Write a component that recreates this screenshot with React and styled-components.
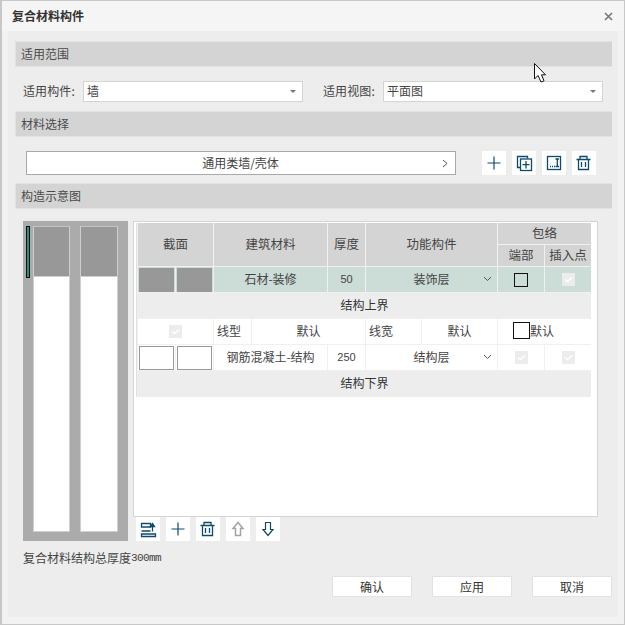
import React from "react";
import styled, { createGlobalStyle } from "styled-components";

const Global = createGlobalStyle`
  html, body { margin: 0; padding: 0; width: 625px; height: 625px; overflow: hidden; background: #fff; }
  * { box-sizing: border-box; }
`;

const Window = styled.div`
  position: relative;
  width: 625px;
  height: 625px;
  background: #f2f2f2;
  border: 1px solid #c8c8c8;
  border-left-width: 2px;
  font: 12px/1 "Noto Sans CJK SC", "Liberation Sans", sans-serif;
  color: #444;
  display: flex;
  flex-direction: column;
`;
const TitleBar = styled.div`
  height: 30px;
  flex: none;
  background: #f5f5f5;
  display: flex;
  align-items: center;
  justify-content: space-between;
  padding: 0 10px 0 10px;
`;
const Title = styled.div`
  font-weight: 700;
  font-size: 12px;
  color: #333;
`;
const Close = styled.svg`
  width: 9px;
  height: 9px;
  margin-right: 1px;
`;
const Body = styled.div`
  flex: none;
  height: 586px;
  margin: 0 6px 0 6px;
  background: #ededed;
  padding: 10px 0 0 7px;
  display: flex;
  flex-direction: column;
`;
const SectionBar = styled.div`
  width: 597px;
  height: 26px;
  flex: none;
  background: #d4d4d4;
  border: 1px solid #e2e2e2;
  border-width: 1px 0 1px 1px;
  padding-left: 5px;
  display: flex;
  align-items: center;
  font-size: 12px;
  color: #4a4a4a;
`;
const ScopeRow = styled.div`
  height: 44px;
  flex: none;
  display: flex;
  align-items: center;
  padding-left: 8px;
  padding-top: 4px;
`;
const FieldLabel = styled.span`
  width: 60px;
  flex: none;
  letter-spacing: 0.1px;
`;
const Select = styled.div`
  width: 220px;
  height: 21px;
  flex: none;
  background: #fff;
  border: 1px solid #d4d4d4;
  display: flex;
  align-items: center;
  justify-content: space-between;
  padding: 0 6px 0 3px;
  margin-right: ${(p) => p.$gap || 0}px;
`;
const Caret = styled.i`
  width: 0;
  height: 0;
  border: 3px solid transparent;
  border-top: 3px solid #777;
  border-bottom: 0;
`;
const MaterialRow = styled.div`
  height: 46px;
  flex: none;
  display: flex;
  align-items: flex-start;
  padding: 14px 0 0 11px;
`;
const MaterialButton = styled.div`
  position: relative;
  width: 430px;
  height: 24px;
  background: #fff;
  border: 1px solid #a9a9a9;
  margin-right: 26px;
  display: flex;
  align-items: center;
  justify-content: center;
  padding-right: 1px;
`;
const Chevron = styled.svg`
  position: absolute;
  right: 7px;
  top: 7px;
  width: 6px;
  height: 9px;
`;
const IconRow = styled.div`
  display: flex;
  gap: 6px;
`;
const IconBtn = styled.div`
  width: 24px;
  height: 24px;
  background: #fff;
  display: flex;
  align-items: center;
  justify-content: center;
`;
const IconSvg = styled.svg`
  width: 24px;
  height: 24px;
  fill: none;
  stroke: ${(p) => p.$c || "#0e4a6c"};
  stroke-width: ${(p) => p.$w || 1.3};
`;
const SchemeArea = styled.div`
  display: flex;
  padding: 12px 0 0 8px;
  gap: 5px;
`;
const Preview = styled.div`
  position: relative;
  width: 105px;
  height: 320px;
  flex: none;
  background: #ababab;
  display: flex;
  gap: 10px;
  padding: 5px 10px 9px 10px;
`;
const PreviewCol = styled.div`
  flex: ${(p) => (p.$wide ? "0 0 38px" : "0 0 37px")};
  background: #fff;
  border: 1px solid #cfcfcf;
  border-top-color: #c4c4c4;
  display: flex;
  flex-direction: column;
`;
const PreviewFill = styled.div`
  height: 50px;
  background: #989898;
  border-bottom: 1px solid #cfcfcf;
`;
const Marker = styled.div`
  position: absolute;
  left: 3px;
  top: 5px;
  width: 4px;
  height: 52px;
  background: #2e8f7d;
  border: 1px solid #111;
`;
const RightCol = styled.div`
  display: flex;
  flex-direction: column;
`;
const TableBox = styled.div`
  width: 465px;
  height: 296px;
  background: #fff;
  border: 1px solid #d4d4d4;
  padding: 1px 0 0 2px;
`;
const Grid = styled.div`
  width: 455px;
  height: 174px;
  display: grid;
  grid-template-columns: 37px 37px 37px 75px 37px 55px 75px 46px 46px;
  grid-template-rows: 21px 21px 25px 25px 25px 25px 26px;
  gap: 1px;
  background: #f0f0f0;
  padding-left: 1px;
  border-left: 1px solid #e0e0e0;
`;
const cellBg = { head: "#d4d4d4", sel: "#ccdcd6", band: "#ededed", plain: "#fff" };
const Cell = styled.div`
  grid-column: ${(p) => p.$c};
  grid-row: ${(p) => p.$r};
  background: ${(p) => cellBg[p.$k || "plain"]};
  display: flex;
  align-items: center;
  justify-content: ${(p) => (p.$left ? "flex-start" : "center")};
  padding: 0 0 ${(p) => (p.$t ? 2 : 0)}px ${(p) => (p.$left ? 3 : 0)}px;
  position: relative;
  color: ${(p) => (p.$dark ? "#333" : "#444")};
  font-size: ${(p) => (p.$k === "head" ? 12.5 : 12)}px;
  min-width: 0;
  white-space: nowrap;
`;
const SmallNum = styled.span`
  font: 11px "Liberation Sans", sans-serif;
  color: #444;
`;
const Swatch = styled.div`
  width: 35px;
  height: 24px;
  background: ${(p) => (p.$fill ? "#989898" : "#fff")};
  border: 1px solid ${(p) => (p.$fill ? "#989898" : "#999")};
`;
const DropChevron = styled.svg`
  position: absolute;
  right: 5px;
  top: 9px;
  width: 9px;
  height: 6px;
`;
const DisabledCheck = styled.svg`
  width: 13px;
  height: 13px;
`;
const EmptyBox = styled.div`
  width: ${(p) => p.$s}px;
  height: ${(p) => p.$s}px;
  flex: none;
  border: 1px solid #111;
  background: ${(p) => (p.$white ? "#fff" : "transparent")};
`;
const LineRow = styled.div`
  display: flex;
  align-items: center;
  padding-left: 15px;
  width: 100%;
  color: #444;
`;
const ToolRow = styled.div`
  display: flex;
  gap: 6px;
  padding: 0 0 0 3px;
`;
const Summary = styled.div`
  padding: 11px 0 0 8px;
  height: 35px;
  flex: none;
  display: flex;
  align-items: flex-start;
`;
const Unit = styled.span`
  font: 11px "Liberation Mono", monospace;
  letter-spacing: -0.6px;
  color: #444;
`;
const Footer = styled.div`
  display: flex;
  gap: 20px;
  padding-left: 317px;
`;
const FooterBtn = styled.div`
  width: 80px;
  height: 21px;
  background: #fff;
  border: 1px solid #e2e2e2;
  display: flex;
  align-items: center;
  justify-content: center;
  color: #333;
`;
const Cursor = styled.svg`
  position: absolute;
  left: 531px;
  top: 61px;
  width: 14px;
  height: 22px;
`;

const Check = () => (
  <DisabledCheck viewBox="0 0 13 13">
    <rect width="13" height="13" fill="#ececec" />
    <path d="M3 6.5 L5.5 8.5 L10 4.5" stroke="#fff" strokeWidth="1.6" fill="none" />
  </DisabledCheck>
);
const Drop = () => (
  <DropChevron viewBox="0 0 9 6">
    <path d="M1 1 L4.5 4.5 L8 1" stroke="#555" fill="none" />
  </DropChevron>
);
const Plus = () => (
  <IconSvg viewBox="0 0 24 24" $w={1.2}><path d="M12 5.5V18.5M5.5 12H18.5" /></IconSvg>
);
const Trash = () => (
  <IconSvg viewBox="0 0 24 24">
    <path d="M4.5 8.5H18.5M8 8.5V5.5H15V8.5M6.5 8.5V18.5H16.5V8.5M9.5 11V16M13.5 11V16" />
  </IconSvg>
);

export default function App() {
  return (
    <Window>
      <Global />
      <TitleBar>
        <Title>复合材料构件</Title>
        <Close viewBox="0 0 9 9">
          <path d="M1 1 L8 8 M8 1 L1 8" stroke="#777" strokeWidth="1.6" />
        </Close>
      </TitleBar>
      <Body>
        <SectionBar>适用范围</SectionBar>
        <ScopeRow>
          <FieldLabel>适用构件:</FieldLabel>
          <Select $gap={20}>墙<Caret /></Select>
          <FieldLabel>适用视图:</FieldLabel>
          <Select>平面图<Caret /></Select>
        </ScopeRow>
        <SectionBar>材料选择</SectionBar>
        <MaterialRow>
          <MaterialButton>
            通用类墙/壳体
            <Chevron viewBox="0 0 6 9"><path d="M1 1 L5 4.5 L1 8" stroke="#555" fill="none" /></Chevron>
          </MaterialButton>
          <IconRow>
            <IconBtn><Plus /></IconBtn>
            <IconBtn>
              <IconSvg viewBox="0 0 24 24">
                <path d="M15.5 7.5V5.5H5.5V16.5H8" />
                <rect x="8.5" y="8" width="11" height="11.5" />
                <path d="M14 10V17.5M10.5 13.7H17.5" />
              </IconSvg>
            </IconBtn>
            <IconBtn>
              <IconSvg viewBox="0 0 24 24">
                <rect x="5.5" y="5.5" width="13" height="13" />
                <path d="M13.5 8H17M15.3 8V15.5M13.5 15.5H17M8 15.5H9M10 15.5H11M12 15.5H13" />
              </IconSvg>
            </IconBtn>
            <IconBtn><Trash /></IconBtn>
          </IconRow>
        </MaterialRow>
        <SectionBar>构造示意图</SectionBar>
        <SchemeArea>
          <Preview>
            <Marker />
            <PreviewCol><PreviewFill /></PreviewCol>
            <PreviewCol $wide><PreviewFill /></PreviewCol>
          </Preview>
          <RightCol>
            <TableBox>
              <Grid>
                <Cell $c="1 / 3" $r="1 / 3" $k="head">截面</Cell>
                <Cell $c="3 / 5" $r="1 / 3" $k="head">建筑材料</Cell>
                <Cell $c="5 / 6" $r="1 / 3" $k="head">厚度</Cell>
                <Cell $c="6 / 8" $r="1 / 3" $k="head">功能构件</Cell>
                <Cell $c="8 / 10" $r="1 / 2" $k="head">包络</Cell>
                <Cell $c="8 / 9" $r="2 / 3" $k="head">端部</Cell>
                <Cell $c="9 / 10" $r="2 / 3" $k="head">插入点</Cell>

                <Cell $c="1 / 2" $r="3 / 4" $k="sel"><Swatch $fill /></Cell>
                <Cell $c="2 / 3" $r="3 / 4" $k="sel"><Swatch $fill /></Cell>
                <Cell $c="3 / 5" $r="3 / 4" $k="sel" $t>石材-装修</Cell>
                <Cell $c="5 / 6" $r="3 / 4" $k="sel" $t><SmallNum>50</SmallNum></Cell>
                <Cell $c="6 / 8" $r="3 / 4" $k="sel" $t>装饰层<Drop /></Cell>
                <Cell $c="8 / 9" $r="3 / 4" $k="sel"><EmptyBox $s={14} /></Cell>
                <Cell $c="9 / 10" $r="3 / 4" $k="sel"><Check /></Cell>

                <Cell $c="1 / 10" $r="4 / 5" $k="band" $dark $t>结构上界</Cell>

                <Cell $c="1 / 3" $r="5 / 6"><Check /></Cell>
                <Cell $c="3 / 4" $r="5 / 6" $t $left>线型</Cell>
                <Cell $c="4 / 6" $r="5 / 6" $t>默认</Cell>
                <Cell $c="6 / 7" $r="5 / 6" $t $left>线宽</Cell>
                <Cell $c="7 / 8" $r="5 / 6" $t>默认</Cell>
                <Cell $c="8 / 10" $r="5 / 6" $t>
                  <LineRow><EmptyBox $s={17} $white />默认</LineRow>
                </Cell>

                <Cell $c="1 / 2" $r="6 / 7"><Swatch /></Cell>
                <Cell $c="2 / 3" $r="6 / 7"><Swatch /></Cell>
                <Cell $c="3 / 5" $r="6 / 7" $t>钢筋混凝土-结构</Cell>
                <Cell $c="5 / 6" $r="6 / 7" $t><SmallNum>250</SmallNum></Cell>
                <Cell $c="6 / 8" $r="6 / 7" $t>结构层<Drop /></Cell>
                <Cell $c="8 / 9" $r="6 / 7"><Check /></Cell>
                <Cell $c="9 / 10" $r="6 / 7"><Check /></Cell>

                <Cell $c="1 / 10" $r="7 / 8" $k="band" $dark $t>结构下界</Cell>
              </Grid>
            </TableBox>
            <ToolRow>
              <IconBtn>
                <IconSvg viewBox="0 0 24 24">
                  <path d="M5.5 6.5H14.5V10H5.5ZM5.5 14H14.5M5.5 17H19.5V19.5H5.5Z" />
                  <path d="M16.5 14.5V8" />
                  <path d="M16.5 6.5L18.5 9.5H14.5Z" fill="#0e4a6c" />
                </IconSvg>
              </IconBtn>
              <IconBtn><Plus /></IconBtn>
              <IconBtn><Trash /></IconBtn>
              <IconBtn>
                <IconSvg $c="#a3a3a3" $w={1.5} viewBox="0 0 24 24">
                  <path d="M12 5.5 L17 11.5 H14.5 V18.5 H9.5 V11.5 H7 Z" />
                </IconSvg>
              </IconBtn>
              <IconBtn>
                <IconSvg $w={1.2} viewBox="0 0 24 24">
                  <path d="M12 18.5 L17 12.5 H14.5 V5.5 H9.5 V12.5 H7 Z" />
                </IconSvg>
              </IconBtn>
            </ToolRow>
          </RightCol>
        </SchemeArea>
        <Summary>复合材料结构总厚度<Unit>300mm</Unit></Summary>
        <Footer>
          <FooterBtn>确认</FooterBtn>
          <FooterBtn>应用</FooterBtn>
          <FooterBtn>取消</FooterBtn>
        </Footer>
      </Body>
      <Cursor viewBox="0 0 14 22">
        <path d="M1.5 1.5 V17 L5 13.5 L8 20 L11 18.8 L8.5 12.8 H12.5 Z" fill="#fff" stroke="#111" strokeWidth="1" />
      </Cursor>
    </Window>
  );
}
